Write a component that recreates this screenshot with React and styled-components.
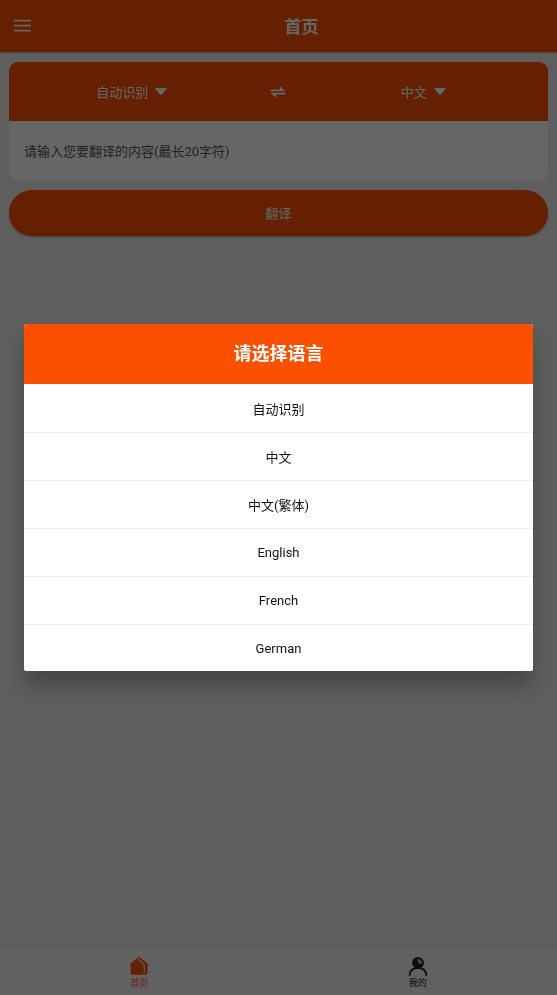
import React, {useState} from "react";
import styled, {createGlobalStyle} from "styled-components";

const languages = ["自动识别", "中文", "中文(繁体)", "English", "French", "German"];

const App = () => {

  const [picker, setPicker] = useState("from");
  const [from, setFrom] = useState("自动识别");
  const [to, setTo] = useState("中文");
  const [text, setText] = useState("");

  const chooseLanguage = (language) => {
    if (picker === "from") {
      setFrom(language);
    } else {
      setTo(language);
    }
    setPicker(null);
  };

  const swapLanguages = () => {
    setFrom(to);
    setTo(from);
  };

  return (
    <Page>
      <GlobalStyle />
      <TopBar>
        <MenuButton type="button" aria-label="菜单">
          <svg width="17" height="13" viewBox="0 0 17 13" fill="currentColor">
            <path d="M0 0.8h17v1.7H0zM0 5.8h17v1.7H0zM0 10.8h17v1.7H0z" />
          </svg>
        </MenuButton>
        <PageTitle>首页</PageTitle>
      </TopBar>
      <Content>
        <Card>
          <LanguageBar>
            <LanguageButton type="button" aria-haspopup="dialog" onClick={() => setPicker("from")}>
              {from}
              <Caret />
            </LanguageButton>
            <SwapButton type="button" aria-label="交换语言" onClick={swapLanguages}>
              <svg width="16" height="12" viewBox="0 0 16 12" fill="currentColor">
                <path d="M0.5 3.5h9.5V0.2L15.6 5.2H0.5z" />
                <path d="M15.5 8.5H6v3.3L0.4 6.8h15.1z" />
              </svg>
            </SwapButton>
            <LanguageButton type="button" aria-haspopup="dialog" onClick={() => setPicker("to")}>
              {to}
              <Caret />
            </LanguageButton>
          </LanguageBar>
          <SourceInput
            type="text"
            maxLength={20}
            aria-label="翻译的内容"
            placeholder="请输入您要翻译的内容(最长20字符)"
            value={text}
            onChange={(e) => setText(e.target.value)}
          />
        </Card>
        <TranslateButton type="button">翻译</TranslateButton>
      </Content>
      <TabBar>
        <Tab href="#home" $active>
          <HomeIcon />
          首页
        </Tab>
        <Tab href="#mine">
          <PersonIcon />
          我的
        </Tab>
      </TabBar>
      {picker && (
        <Overlay>
          <Dialog role="dialog" aria-modal="true" aria-labelledby="picker-title">
            <DialogTitle id="picker-title">请选择语言</DialogTitle>
            <LanguageList>
              {languages.map((language) => (
                <li key={language}>
                  <LanguageOption type="button" onClick={() => chooseLanguage(language)}>
                    {language}
                  </LanguageOption>
                </li>
              ))}
            </LanguageList>
          </Dialog>
        </Overlay>
      )}
    </Page>
  );
}

const Caret = () => (
  <svg width="12" height="7" viewBox="0 0 12 7" fill="currentColor">
    <path d="M0.8 0h10.4q1.2 0.2 0.4 1.1L6.9 6.4q-0.9 0.8-1.8 0L0.4 1.1Q-0.4 0.2 0.8 0z" />
  </svg>
);

const HomeIcon = () => (
  <svg width="20" height="20" viewBox="0 0 20 20">
    <path d="M1.5 8.6q0-1 0.8-1.7L8.6 1.8q1.4-1 2.8 0l6.3 5.1q0.8 0.7 0.8 1.7v8.4q0 1.8-1.8 1.8H3.3q-1.8 0-1.8-1.8z" fill="currentColor" />
    <path d="M9.4 3.2l5 4.4q0.9 0.8 0.9 1.9v7.3" fill="none" stroke="#f2f2f2" strokeWidth="1.2" strokeLinecap="round" />
  </svg>
);

const PersonIcon = () => (
  <svg width="20" height="20" viewBox="0 0 20 20">
    <circle cx="10" cy="6.8" r="5.9" fill="currentColor" />
    <path d="M10 3a4 4 0 0 1 3.9 4.2q-0.2 1-1.1 0.9Q9.8 7.4 9.4 4Q9.3 3 10 3z" fill="#f2f2f2" opacity="0.7" />
    <path d="M1.6 18.8c0.4-3.8 3.2-6.8 8.4-6.8s8 3 8.4 6.8" fill="none" stroke="currentColor" strokeWidth="2" strokeLinecap="round" />
  </svg>
);

const GlobalStyle = createGlobalStyle`
  * {
    box-sizing: border-box;
  }

  body {
    margin: 0;
    background-color: #ebebeb;
  }

  body, button, input {
    font-family: Roboto, "Noto Sans CJK SC", sans-serif;
    font-size: 13px;
  }

  button {
    border: none;
    padding: 0;
    cursor: pointer;
  }

  svg {
    display: block;
  }
`;

const Page = styled.div`
  display: flex;
  flex-direction: column;
  min-height: 100vh;
`;

const TopBar = styled.header`
  display: grid;
  grid-template-columns: 32px 1fr;
  align-items: center;
  height: 52px;
  padding: 0 0 1px 14px;
  background-color: #fa5000;
  color: #ffffff;
  box-shadow: 0 1px 2px rgba(0, 0, 0, 0.3);
`;

const MenuButton = styled.button`
  background: none;
  color: inherit;
`;

const PageTitle = styled.h1`
  margin: 0;
  font-size: 17px;
  font-weight: 700;
  text-align: center;
`;

const Content = styled.main`
  flex: 1;
  display: flex;
  flex-direction: column;
  gap: 9px;
  padding: 10px 9px;
`;

const Card = styled.section`
  overflow: hidden;
  border-radius: 9px;
  background-color: #ffffff;
`;

const LanguageBar = styled.div`
  display: grid;
  grid-template-columns: 1fr 46px 1fr;
  height: 59px;
  padding-right: 2px;
  background-color: #fa5000;
  color: #ffffff;
`;

const LanguageButton = styled.button`
  display: flex;
  align-items: center;
  justify-content: center;
  gap: 7px;
  background: none;
  color: inherit;
`;

const SwapButton = styled.button`
  display: flex;
  align-items: center;
  justify-content: center;
  background: none;
  color: inherit;
`;

const SourceInput = styled.input`
  display: block;
  width: 100%;
  height: 60px;
  padding: 0 15px;
  border: none;
  outline: none;
  background: none;
  color: #333333;

  &::placeholder {
    color: #555555;
    opacity: 1;
  }
`;

const TranslateButton = styled.button`
  height: 46px;
  padding-bottom: 2px;
  border-radius: 23px;
  background-color: #fa5000;
  color: #ffffff;
  box-shadow: 0 1px 2px rgba(0, 0, 0, 0.3);
`;

const TabBar = styled.nav`
  display: flex;
  height: 47px;
  background-color: #f2f2f2;
`;

const Tab = styled.a`
  flex: 1;
  display: flex;
  flex-direction: column;
  align-items: center;
  justify-content: center;
  gap: 1px;
  padding-top: 2px;
  font-size: 9px;
  line-height: 12px;
  text-decoration: none;
  color: ${({$active}) => $active ? "#fa5000" : "#222222"};
`;

const Overlay = styled.div`
  position: fixed;
  inset: 0;
  display: flex;
  align-items: center;
  justify-content: center;
  padding: 24px;
  background-color: rgba(0, 0, 0, 0.6);
`;

const Dialog = styled.div`
  width: 100%;
  overflow: hidden;
  border-radius: 2px;
  background-color: #ffffff;
  box-shadow: 0 16px 20px rgba(0, 0, 0, 0.25);
`;

const DialogTitle = styled.h2`
  margin: 0;
  background-color: #fa5000;
  color: #ffffff;
  font-size: 18px;
  font-weight: 700;
  line-height: 60px;
  text-align: center;
`;

const LanguageList = styled.ul`
  max-height: 287px;
  margin: 0;
  padding: 1px 0 0;
  overflow-y: auto;
  list-style: none;
  scrollbar-width: none;
`;

const LanguageOption = styled.button`
  display: block;
  width: 100%;
  height: 48px;
  border-bottom: 1px solid #eeeeee;
  background: none;
  color: #111111;
`;

export default App;
